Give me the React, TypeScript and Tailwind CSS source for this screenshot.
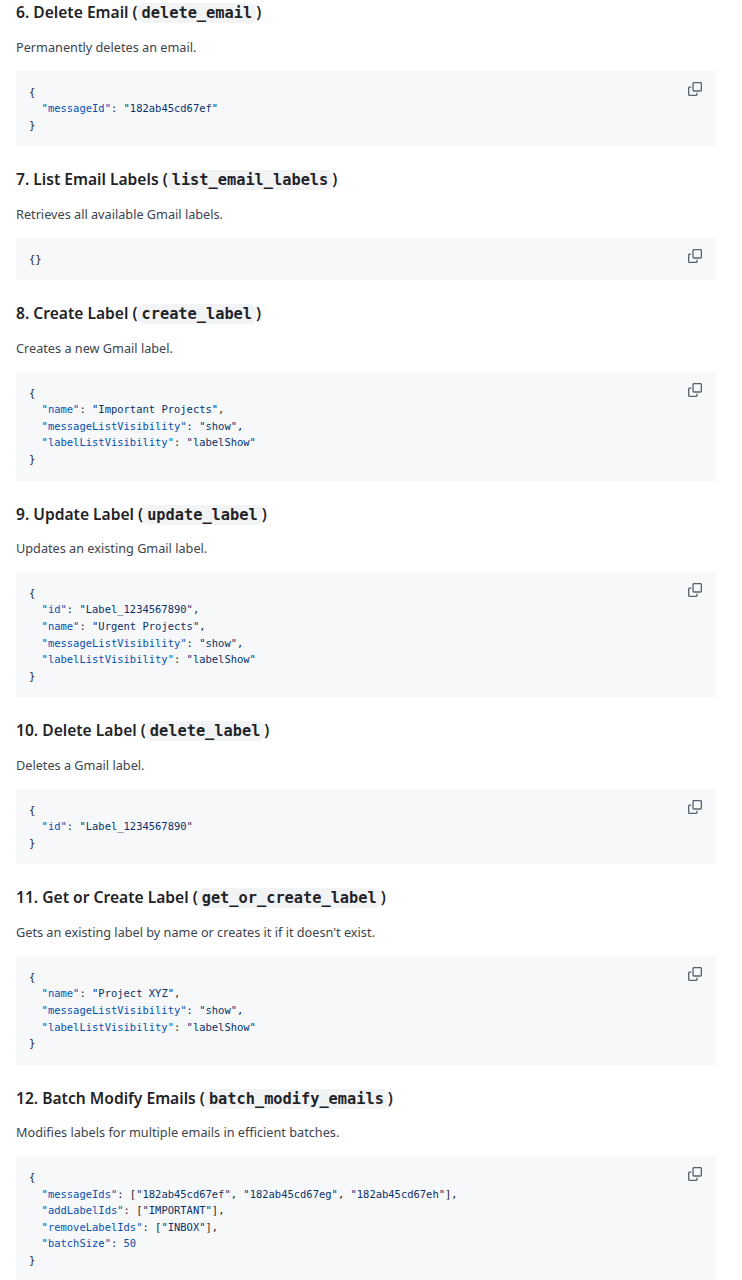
import React from "react";

type Tok = [string, string?];
const K = "text-[#0550ae]";
const S = "text-[#0a3069]";
const P = "text-[#1f2328]";

function kv(key: string, rest: Tok[], comma = true): Tok[] {
  return [["  ", P], [`"${key}"`, K], [": ", P], ...rest, ...(comma ? ([[",", P]] as Tok[]) : [])];
}
const str = (s: string): Tok => [`"${s}"`, S];

const show = kv("messageListVisibility", [str("show")]);
const lab = kv("labelListVisibility", [str("labelShow")], false);

const sections: { n: string; title: string; code: string; desc: string; lines: Tok[][] }[] = [
  { n: "6.", title: "Delete Email", code: "delete_email", desc: "Permanently deletes an email.",
    lines: [[["{", P]], kv("messageId", [str("182ab45cd67ef")], false), [["}", P]]] },
  { n: "7.", title: "List Email Labels", code: "list_email_labels", desc: "Retrieves all available Gmail labels.",
    lines: [[["{}", P]]] },
  { n: "8.", title: "Create Label", code: "create_label", desc: "Creates a new Gmail label.",
    lines: [[["{", P]], kv("name", [str("Important Projects")]), show, lab, [["}", P]]] },
  { n: "9.", title: "Update Label", code: "update_label", desc: "Updates an existing Gmail label.",
    lines: [[["{", P]], kv("id", [str("Label_1234567890")]), kv("name", [str("Urgent Projects")]), show, lab, [["}", P]]] },
  { n: "10.", title: "Delete Label", code: "delete_label", desc: "Deletes a Gmail label.",
    lines: [[["{", P]], kv("id", [str("Label_1234567890")], false), [["}", P]]] },
  { n: "11.", title: "Get or Create Label", code: "get_or_create_label", desc: "Gets an existing label by name or creates it if it doesn't exist.",
    lines: [[["{", P]], kv("name", [str("Project XYZ")]), show, lab, [["}", P]]] },
  { n: "12.", title: "Batch Modify Emails", code: "batch_modify_emails", desc: "Modifies labels for multiple emails in efficient batches.",
    lines: [
      [["{", P]],
      kv("messageIds", [["[", P], str("182ab45cd67ef"), [", ", P], str("182ab45cd67eg"), [", ", P], str("182ab45cd67eh"), ["]", P]]),
      kv("addLabelIds", [["[", P], str("IMPORTANT"), ["]", P]]),
      kv("removeLabelIds", [["[", P], str("INBOX"), ["]", P]]),
      kv("batchSize", [["50", K]], false),
      [["}", P]],
    ] },
];

function CopyIcon() {
  return (
    <svg viewBox="0 0 16 16" className="w-[14px] h-[14px] fill-[#59636e]">
      <path d="M0 6.75C0 5.784.784 5 1.75 5h1.5a.75.75 0 0 1 0 1.5h-1.5a.25.25 0 0 0-.25.25v7.5c0 .138.112.25.25.25h7.5a.25.25 0 0 0 .25-.25v-1.5a.75.75 0 0 1 1.5 0v1.5A1.75 1.75 0 0 1 9.25 16h-7.5A1.75 1.75 0 0 1 0 14.25Z" />
      <path d="M5 1.75C5 .784 5.784 0 6.75 0h7.5C15.216 0 16 .784 16 1.75v7.5A1.75 1.75 0 0 1 14.25 11h-7.5A1.75 1.75 0 0 1 5 9.25Zm1.75-.25a.25.25 0 0 0-.25.25v7.5c0 .138.112.25.25.25h7.5a.25.25 0 0 0 .25-.25v-7.5a.25.25 0 0 0-.25-.25Z" />
    </svg>
  );
}

export default function App() {
  return (
    <div className="h-[1280px] overflow-hidden bg-white pl-4 pr-[26px] pt-[0.3px] font-['Noto_Sans','Open_Sans',sans-serif]">
      {sections.map((s, i) => (
        <section key={s.n} className={i === 0 ? "" : "mt-[21px]"}>
          <h3 className="h-6 leading-6 text-[15.6px] font-semibold text-[#1f2328] whitespace-pre">
            {s.n} {s.title} (
            <code className="font-['DejaVu_Sans_Mono',monospace] text-[15.3px] font-bold bg-[#f2f3f5] rounded-md px-1 py-[1px]">{s.code}</code>
            )
          </h3>
          <p className="mt-[12.3px] h-5 leading-5 text-[12.7px] text-[#3d444d]">{s.desc}</p>
          <div className="relative mt-[14px] bg-[#f6f8fa] px-[13px] py-[13px]">
            <pre className="font-['DejaVu_Sans_Mono',monospace] text-[10.48px] leading-[16.6px] whitespace-pre">
              {s.lines.map((l, j) => (
                <div key={j}>
                  {l.map((t, k) => (
                    <span key={k} className={t[1]}>{t[0]}</span>
                  ))}
                </div>
              ))}
            </pre>
            <div className="absolute right-[14px] top-[11px]">
              <CopyIcon />
            </div>
          </div>
        </section>
      ))}
    </div>
  );
}
